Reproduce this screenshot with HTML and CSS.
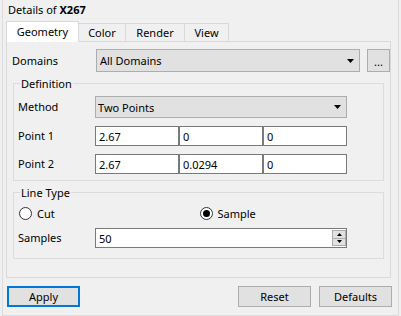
FILE: index.html
```html
<!DOCTYPE html>
<html>
<head>
<meta charset="utf-8">
<link rel="stylesheet" href="styles.css">
</head>
<body>
<div class="frame">
  <div class="title">Details of <b>X267</b></div>
  <div class="tabs">
    <div class="tab active t-geo">Geometry</div>
    <div class="tab t-col">Color</div>
    <div class="tab t-ren">Render</div>
    <div class="tab t-view">View</div>
  </div>
  <div class="pane">
    <div class="domains">
      <span class="label">Domains</span>
      <div class="combo"><span>All Domains</span><svg class="arrow" width="7" height="4" viewBox="0 0 7 4"><polygon points="0,0 7,0 3.5,4" fill="#000"/></svg></div>
      <div class="btn dots">...</div>
    </div>
    <div class="group def">
      <div class="gtitle">Definition</div>
      <div class="form">
        <span class="label">Method</span>
        <div class="combo"><span>Two Points</span><svg class="arrow" width="7" height="4" viewBox="0 0 7 4"><polygon points="0,0 7,0 3.5,4" fill="#000"/></svg></div>
        <span class="label">Point 1</span>
        <div class="triple"><div class="edit">2.67</div><div class="edit">0</div><div class="edit">0</div></div>
        <span class="label">Point 2</span>
        <div class="triple"><div class="edit">2.67</div><div class="edit">0.0294</div><div class="edit">0</div></div>
      </div>
    </div>
    <div class="group lt">
      <div class="gtitle">Line Type</div>
      <div class="radios">
        <div class="radio"><span class="circle"></span>Cut</div>
        <div class="radio"><span class="circle on"></span>Sample</div>
      </div>
      <div class="samples">
        <span class="label">Samples</span>
        <div class="edit spin"><span>50</span>
          <div class="spinbtns">
            <div class="sb"><svg width="5" height="3" viewBox="0 0 5 3"><polygon points="0,3 5,3 2.5,0" fill="#000"/></svg></div>
            <div class="sb"><svg width="5" height="3" viewBox="0 0 5 3"><polygon points="0,0 5,0 2.5,3" fill="#000"/></svg></div>
          </div>
        </div>
      </div>
    </div>
  </div>
  <div class="buttons">
    <div class="btn apply">Apply</div>
    <div class="btn reset">Reset</div>
    <div class="btn">Defaults</div>
  </div>
</div>
</body>
</html>
```

FILE: styles.css
```css
* { box-sizing: border-box; }
body {
  margin: 0;
  background: #f0f0f0;
  font-family: "Noto Sans", "Open Sans", sans-serif;
  font-size: 11px;
  color: #000;
}
.frame {
  margin-left: 2px;
  width: 397px;
  height: 316px;
  border: 1px solid #dcdcdc;
  border-top: 0;
  padding: 0 0 8px 0;
  display: flex;
  flex-direction: column;
}
.title {
  height: 21px;
  line-height: 20px;
  padding-left: 5px;
}
.title b { font-weight: 700; }
.tabs {
  display: flex;
  align-items: flex-end;
  height: 20px;
  margin-left: 3px;
}
.tab {
  height: 18px;
  border: 1px solid #d9d9d9;
  border-left: 0;
  border-bottom: 0;
  text-align: center;
  line-height: 17px;
  background: #f0f0f0;
}
.tab.active {
  position: relative;
  z-index: 1;
  height: 21px;
  margin-bottom: -1px;
  border-left: 1px solid #d9d9d9;
  background: #fff;
  line-height: 20px;
}
.t-geo { width: 73px; }
.t-col { width: 47px; }
.t-ren { width: 59px; }
.t-view { width: 44px; }
.pane {
  margin-left: 3px;
  width: 385px;
  height: 237px;
  border: 1px solid #d9d9d9;
  padding: 7px 7px 0 5px;
}
.domains {
  display: grid;
  grid-template-columns: 77px 264px 23px;
  column-gap: 7px;
  height: 23px;
  align-items: center;
}
.label { line-height: 16px; }
.combo {
  height: 100%;
  border: 1px solid #adadad;
  background: #e1e1e1;
  display: flex;
  align-items: center;
  justify-content: space-between;
  padding: 0 5px 0 3px;
}
.arrow { display: block; }
.btn {
  border: 1px solid #adadad;
  background: #e1e1e1;
  display: flex;
  align-items: center;
  justify-content: center;
}
.dots { height: 23px; line-height: 1; padding-top: 2px; }
.group {
  margin: 11px 0 0 1px;
  width: 371px;
  border: 1px solid #dcdcdc;
  padding: 0 4px 6px 4px;
}
.gtitle {
  margin: -8px 0 0 2px;
  padding: 0 1px;
  width: fit-content;
  background: #f0f0f0;
  line-height: 15px;
}
.form {
  margin-top: 5px;
  display: grid;
  grid-template-columns: 77px 252px;
  grid-template-rows: 22px 20px 20px;
  row-gap: 8px;
  align-items: center;
}
.form .combo { padding-left: 2px; }
.triple {
  display: grid;
  grid-template-columns: 84px 84px 84px;
  height: 100%;
}
.edit {
  height: 100%;
  background: #fff;
  border: 1px solid #7a7a7a;
  padding-left: 3px;
  display: flex;
  align-items: center;
}
.lt { padding-bottom: 10px; }
.radios {
  margin-top: 3px;
  display: grid;
  grid-template-columns: 1fr 1fr;
  height: 20px;
  align-items: center;
}
.radio {
  display: flex;
  align-items: center;
  padding-left: 1px;
}
.circle {
  width: 13px;
  height: 13px;
  border: 1px solid #333;
  border-radius: 50%;
  background: #fff;
  margin-right: 5px;
  display: flex;
  align-items: center;
  justify-content: center;
}
.circle.on::after {
  content: "";
  width: 7px;
  height: 7px;
  border-radius: 50%;
  background: #000;
}
.samples {
  margin-top: 5px;
  display: grid;
  grid-template-columns: 77px 252px;
  height: 20px;
  align-items: center;
}
.spin {
  justify-content: space-between;
  padding-right: 0;
}
.spinbtns {
  width: 14px;
  height: 16px;
  border: 1px solid #adadad;
  background: #e1e1e1;
  display: flex;
  flex-direction: column;
}
.sb {
  flex: 1;
  display: flex;
  align-items: center;
  justify-content: center;
}
.sb + .sb { border-top: 1px solid #adadad; }
.sb svg { display: block; }
.buttons {
  margin: 8px 6px 0 4px;
  display: flex;
  gap: 8px;
  height: 21px;
}
.buttons .btn { width: 73px; }
.apply { border: 2px solid #0078d7; }
.reset { margin-left: auto; }
```
